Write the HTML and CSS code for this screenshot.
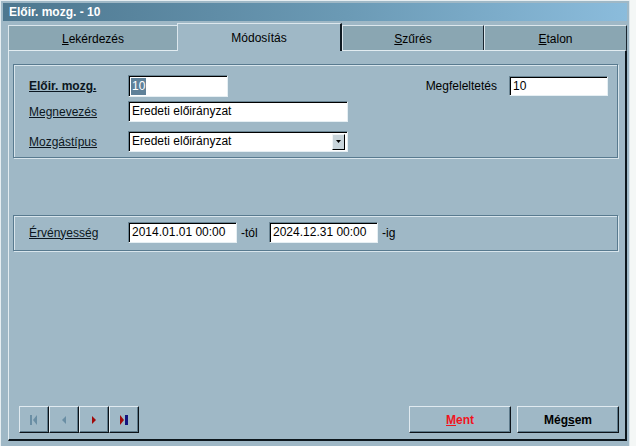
FILE: index.html
```html
<!DOCTYPE html>
<html lang="hu">
<head>
<meta charset="utf-8">
<title>Előir. mozg. - 10</title>
<link rel="stylesheet" href="styles.css">
</head>
<body>
<div class="desk-mark"></div>
<div class="window">
  <div class="titlebar">Előir. mozg. - 10</div>
  <div class="tabs">
    <div class="tab t1"><span><u>L</u>ekérdezés</span></div>
    <div class="tab t2 active"><span>Módosítás</span></div>
    <div class="tab t3"><span><u>S</u>zűrés</span></div>
    <div class="tab t4"><span><u>E</u>talon</span></div>
  </div>
  <div class="page">
    <div class="frame frame-main">
      <div class="row row1">
        <label class="lbl bold"><u>Előir. mozg.</u></label>
        <div class="field f-short"><span class="sel">10</span></div>
        <div class="spacer"></div>
        <label class="lbl-plain">Megfeleltetés</label>
        <div class="field f-match">10</div>
      </div>
      <div class="row row2">
        <label class="lbl"><u>Megnevezés</u></label>
        <div class="field f-long">Eredeti előirányzat</div>
      </div>
      <div class="row row3">
        <label class="lbl"><u>Mozgástípus</u></label>
        <div class="field f-long combo">
          <span class="combo-text">Eredeti előirányzat</span>
          <span class="combo-btn"><svg width="5" height="3" viewBox="0 0 5 3"><polygon points="0,0 5,0 2.5,3" fill="#000"/></svg></span>
        </div>
      </div>
    </div>
    <div class="frame frame-valid">
      <div class="row">
        <label class="lbl"><u>Érvényesség</u></label>
        <div class="field f-date">2014.01.01 00:00</div>
        <span class="suffix suffix-tol">-tól</span>
        <div class="field f-date">2024.12.31 00:00</div>
        <span class="suffix">-ig</span>
      </div>
    </div>
    <div class="bottom">
      <div class="nav">
        <div class="btn nbtn"><svg width="8" height="10" viewBox="0 0 8 10"><rect x="0" y="0" width="2" height="10" fill="#6a8ea4"/><polygon points="7,0 3,5 7,10" fill="#6a8ea4"/></svg></div>
        <div class="btn nbtn"><svg width="5" height="10" viewBox="0 0 5 10"><polygon points="4,1 0,5 4,9" fill="#6a8ea4"/></svg></div>
        <div class="btn nbtn"><svg width="5" height="10" viewBox="0 0 5 10"><polygon points="0,1 4,5 0,9" fill="#a00a0a"/></svg></div>
        <div class="btn nbtn"><svg width="8" height="10" viewBox="0 0 8 10"><polygon points="0,0 4,5 0,10" fill="#a00a0a"/><rect x="5" y="0" width="3" height="10" fill="#14147e"/></svg></div>
      </div>
      <div class="actions">
        <div class="btn abtn ment"><u>M</u>ent</div>
        <div class="btn abtn">Még<u>s</u>em</div>
      </div>
    </div>
  </div>
</div>
</body>
</html>
```
FILE: styles.css
```css
* { box-sizing: border-box; }
html, body { margin: 0; padding: 0; }
body {
  width: 636px;
  height: 446px;
  overflow: hidden;
  background: #f4f7f6;
  font-family: "Liberation Sans", Arial, sans-serif;
  font-size: 12px;
  color: #000;
  position: relative;
}
.desk-mark {
  position: absolute;
  left: 0;
  top: 268px;
  width: 4px;
  height: 62px;
  background: linear-gradient(#5a6fa8, #93a6c8);
}
.window {
  position: relative;
  width: 630px;
  height: 446px;
  background: #9fb8c6;
  padding: 3px 3px 5px 3px;
  display: flex;
  flex-direction: column;
  box-shadow: inset 1px 1px 0 #e6eef2, inset -1px 0 0 #dbe6ec;
}
.titlebar {
  height: 18px;
  line-height: 18px;
  padding-left: 6px;
  color: #fff;
  font-weight: bold;
  font-size: 12px;
  background: linear-gradient(to right, #4d778f, #6b9ab5 55%, #8bbcdc);
}
.tabs {
  display: flex;
  margin: 2px 0 -1px 5px;
  height: 28px;
  position: relative;
  z-index: 1;
}
.tab {
  margin-top: 2px;
  height: 25px;
  background: #8aa6b2;
  border-top: 1px solid #dce7ed;
  border-left: 1px solid #dce7ed;
  border-right: 1px solid #1a2630;
  display: flex;
  align-items: center;
  justify-content: center;
}
.tab span { padding-top: 1px; }
.t1 { width: 169px; border-right: none; }
.t2 { width: 165px; }
.t3 { width: 142px; }
.t4 { width: 143px; }
.tab.active {
  margin-top: 0;
  height: 28px;
  background: #9fb8c6;
  border-right: 2px solid #0f1a22;
  align-items: flex-start;
  padding-top: 6px;
}
.page {
  flex: 1;
  margin-left: 5px;
  border-top: 1px solid #e2ecf1;
  border-left: 1px solid #e2ecf1;
  border-right: 2px solid #0d161c;
  border-bottom: 2px solid #0d161c;
  padding: 13px 7px 6px 4px;
  display: flex;
  flex-direction: column;
}
.frame {
  border: 1px solid #587a8f;
  box-shadow: inset 1px 1px 0 #d8e5ec, 1px 1px 0 #d8e5ec;
  padding-left: 15px;
}
.frame-main {
  height: 94px;
  padding-top: 10px;
  padding-right: 9px;
}
.frame-valid {
  margin-top: 57px;
  height: 36px;
  padding-top: 6px;
}
.row { display: flex; align-items: center; }
.row1 { height: 22px; margin-bottom: 4px; }
.row2 { height: 21px; margin-bottom: 9px; }
.row3 { height: 21px; }
.lbl {
  width: 99px;
  flex: none;
  color: #0b1620;
}
.bold { font-weight: bold; }
.spacer { flex: 1; }
.lbl-plain { margin-right: 12px; }
.field {
  background: #fff;
  border-top: 1px solid #6a8594;
  border-left: 1px solid #6a8594;
  border-right: 1px solid #e6eff3;
  border-bottom: 1px solid #e6eff3;
  box-shadow: inset 1px 1px 0 #000;
  height: 21px;
  line-height: 19px;
  padding-left: 3px;
  white-space: nowrap;
  flex: none;
}
.f-short { width: 100px; height: 22px; line-height: 20px; }
.f-match { width: 99px; height: 20px; line-height: 18px; }
.f-long { width: 220px; }
.f-date { width: 109px; }
.sel {
  display: inline-block;
  background: #5f8199;
  color: #fff;
  padding: 0 1px;
  line-height: 17px;
  margin-left: -1px;
}
.combo { display: flex; align-items: center; justify-content: space-between; padding-right: 2px; }
.combo-btn {
  width: 13px;
  height: 16px;
  background: #c8d4da;
  border-top: 1px solid #f0f4f6;
  border-left: 1px solid #f0f4f6;
  border-right: 1px solid #000;
  border-bottom: 1px solid #000;
  display: flex;
  align-items: center;
  justify-content: center;
}
.suffix { padding-left: 4px; }
.suffix-tol { width: 32px; }
.bottom {
  margin-top: auto;
  display: flex;
  justify-content: space-between;
  margin-left: 6px;
  margin-right: -1px;
}
.nav { display: flex; }
.btn {
  height: 27px;
  background: #9fb8c6;
  border-top: 1px solid #e0eaf0;
  border-left: 1px solid #e0eaf0;
  border-right: 1px solid #0c1218;
  border-bottom: 1px solid #0c1218;
  box-shadow: inset -1px -1px 0 #5d7a8b;
  display: flex;
  align-items: center;
  justify-content: center;
}
.nbtn { width: 30px; }
.actions { display: flex; gap: 6px; }
.abtn { width: 102px; font-weight: bold; }
.ment { color: #f0141e; }
```
